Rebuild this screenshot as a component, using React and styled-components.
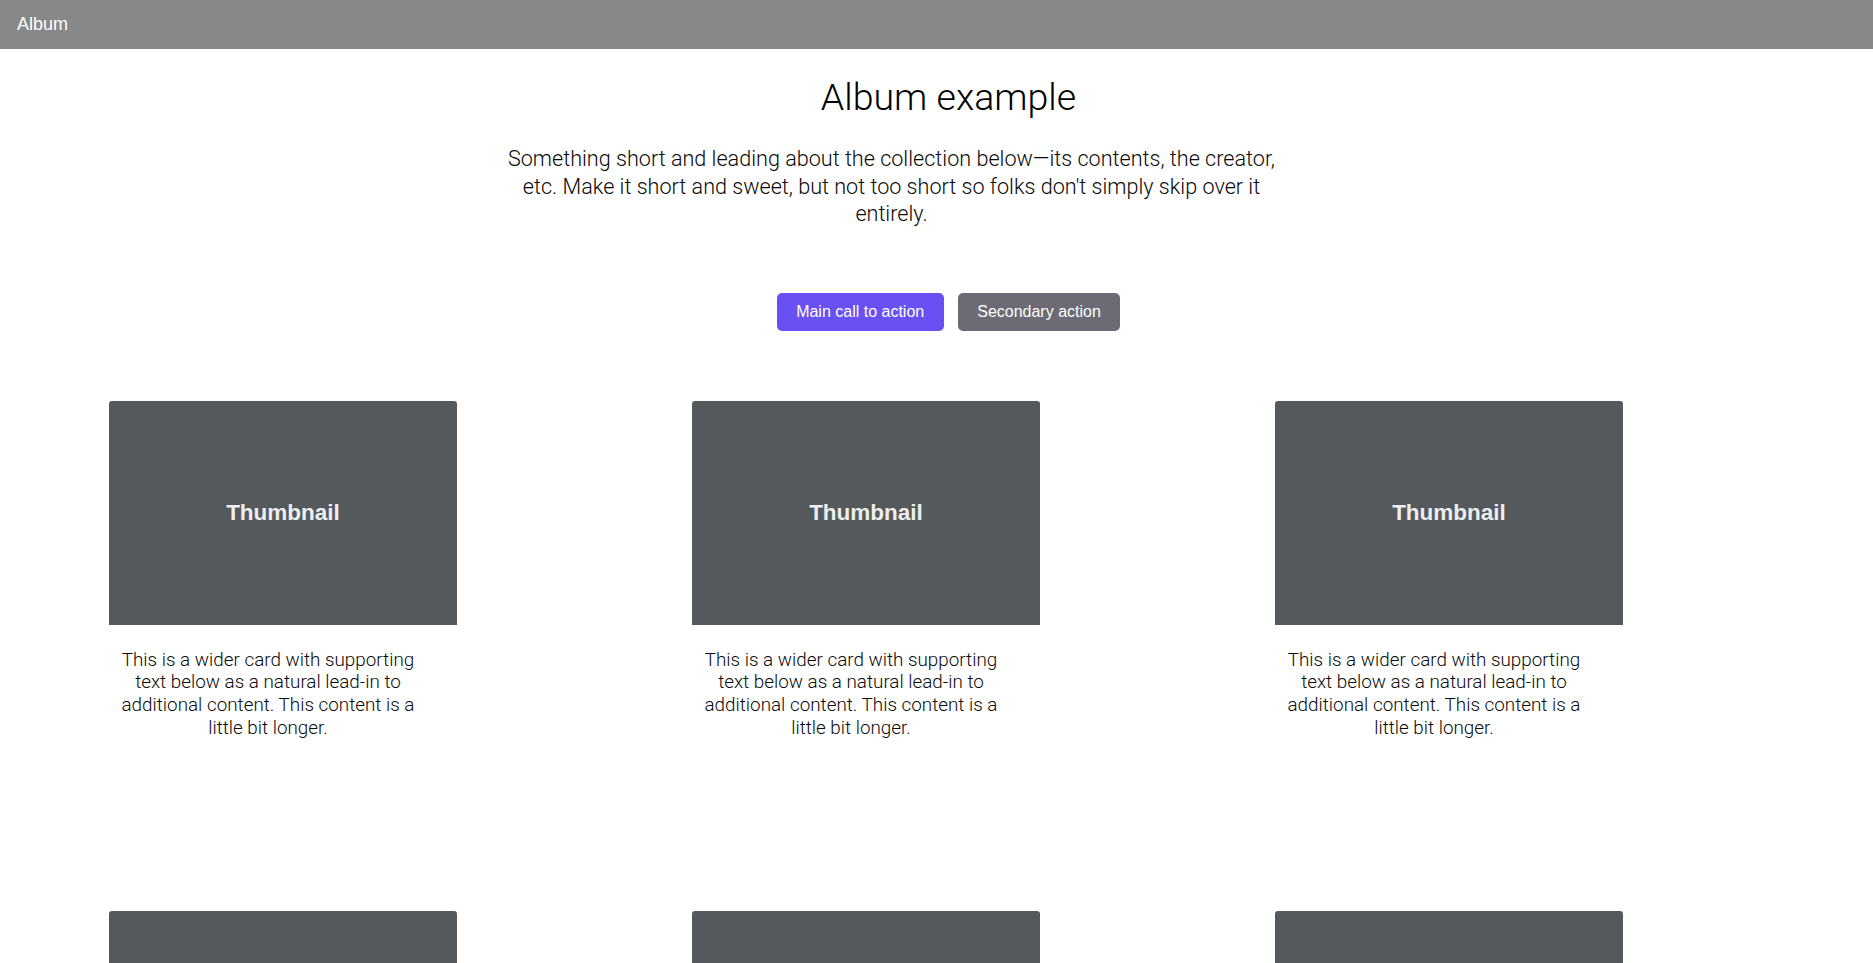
import styled, { createGlobalStyle } from "styled-components";

const GlobalStyle = createGlobalStyle`
  html, body {
    margin: 0;
    padding: 0;
    background: #fff;
  }
  body {
    font-family: Roboto, "Noto Sans", sans-serif;
    color: #111;
  }
`;

const TopBar = styled.header`
  display: flex;
  align-items: center;
  height: 49px;
  padding: 0 17px;
  background-color: #888888;
`;

const Brand = styled.span`
  font-family: "Liberation Sans", Arial, sans-serif;
  font-size: 18px;
  color: #fff;
`;

const Hero = styled.section`
  display: flex;
  flex-direction: column;
  align-items: center;
  padding: 26px 0 0 24px;
  text-align: center;
`;

const Title = styled.h1`
  margin: 0;
  font-family: Roboto, sans-serif;
  font-weight: 300;
  font-size: 37.5px;
  color: #000;
`;

const Lead = styled.p`
  max-width: 790px;
  margin: 26px 114px 0 0;
  font-family: Roboto, sans-serif;
  font-weight: 300;
  font-size: 21.6px;
  line-height: 27.5px;
  color: #0a0a0a;
`;

const Actions = styled.div`
  display: flex;
  gap: 14px;
  margin-top: 65px;
`;

const Button = styled.button`
  height: 38px;
  padding: 0 ${({ secondary }) => (secondary ? "19.5px" : "19.5px")};
  border: none;
  border-radius: 5px;
  font-family: "Liberation Sans", Arial, sans-serif;
  font-size: 16px;
  color: #fff;
  cursor: pointer;
  background-color: ${({ secondary }) => (secondary ? "#6c6a74" : "#6950f2")};
`;

const CardGrid = styled.div`
  display: grid;
  grid-template-columns: repeat(3, 348px);
  grid-auto-rows: 452px;
  column-gap: 235px;
  row-gap: 58px;
  padding: 70px 0 0 109px;
`;

const Card = styled.article`
  display: flex;
  flex-direction: column;
`;

const Thumb = styled.div`
  display: flex;
  align-items: center;
  justify-content: center;
  height: 224px;
  border-radius: 3px 3px 0 0;
  background-color: #55595c;
  font-family: "Liberation Sans", Arial, sans-serif;
  font-weight: bold;
  font-size: 22.5px;
  color: #eceeef;
`;

const CardText = styled.p`
  width: 318px;
  margin: 24px 0 0;
  font-family: Roboto, sans-serif;
  font-weight: 300;
  font-size: 18.85px;
  line-height: 22.7px;
  text-align: center;
  color: #0a0a0a;
`;

const cardText =
  "This is a wider card with supporting text below as a natural lead-in to additional content. This content is a little bit longer.";

export default function App() {
  const cards = [1, 2, 3, 4, 5, 6];
  return (
    <>
      <GlobalStyle />
      <TopBar>
        <Brand>Album</Brand>
      </TopBar>
      <Hero>
        <Title>Album example</Title>
        <Lead>
          Something short and leading about the collection below—its contents,
          the creator, etc. Make it short and sweet, but not too short so folks
          don't simply skip over it entirely.
        </Lead>
        <Actions>
          <Button>Main call to action</Button>
          <Button secondary>Secondary action</Button>
        </Actions>
      </Hero>
      <CardGrid>
        {cards.map((n) => (
          <Card key={n}>
            <Thumb>Thumbnail</Thumb>
            <CardText>{cardText}</CardText>
          </Card>
        ))}
      </CardGrid>
    </>
  );
}
